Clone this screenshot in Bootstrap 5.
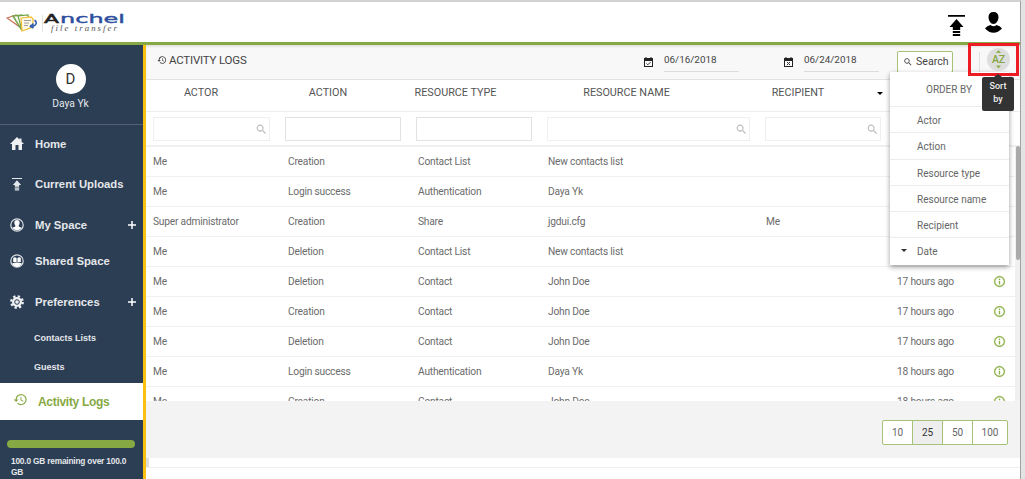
<!DOCTYPE html>
<html lang="en">
<head>
<meta charset="utf-8">
<title>Activity Logs</title>
<link href="https://cdn.jsdelivr.net/npm/bootstrap@5.3.0/dist/css/bootstrap.min.css" rel="stylesheet">
<style>
body{background:#e3e3e3;font-family:Roboto,"Liberation Sans",sans-serif;font-size:10.5px;line-height:14px;color:#666;height:479px;overflow:hidden}
svg{display:block;flex:none}
.app{width:1021px;height:479px;background:#fff;border-top:2px solid #d3d3d3;border-right:1px solid #a2a2a2}
.topbar{height:43px;border-bottom:3px solid #87a944;padding:0 18px 0 6px;color:#000}
.side{width:146px;background:#2c3e54;border-right:3px solid #fdbf12;color:#e4e7ea;font-family:"Liberation Sans",sans-serif;font-weight:700}
.profile{height:80px;border-bottom:1px solid #536071;padding:19px 2px 0 0}
.avatar{width:30px;height:30px;background:#fff;color:#333;font:15px/30px Roboto,sans-serif}
.user{font:10.3px/14px Roboto,sans-serif;margin-top:3px}
.item{padding:0 6px 0 10px;font-size:11.3px}
.item span{margin-left:11px}
.sub{font-size:9px;padding-left:34px;line-height:29px;height:29px}
.active-item{height:37px;background:#fff;color:#87a944;font-size:12px;letter-spacing:-.3px;padding-left:13px}
.active-item span{margin-left:10px}
.quota{height:8px;background:#87a944;border-radius:4px;margin:20px 8px 0 7px}
.quota-text{font-size:8.300px;letter-spacing:-.18px;line-height:11px;margin:8px 8px 0 11px}
.main{width:874px}
.tools{height:35px;background:#f8f8f8;border-bottom:1px solid #e2e2e2;box-shadow:inset 0 2px 2px #e4e4e4;color:#444}
.title{font-size:11.5px;letter-spacing:-.2px;width:498px;padding:0 0 4px 11px;gap:2px}
.date{width:75px;height:20px;border-bottom:1px solid #dcdcdc;font-size:9.900px;line-height:15px}
.search{width:56px;height:22px;border:1px solid #a5c275;border-radius:2px;background:#fff;font-size:10.6px;padding:0 5px;gap:3px;color:#444}
.logrow{display:grid;grid-template-columns:132px 131px 131px 218px 131px 102px 1fr}
.heads{height:32px;border-bottom:1px solid #eee;font-size:10.8px;align-items:center;color:#555;padding-bottom:6px;text-align:center}
.filters{height:35px;border-bottom:2px solid #f0f0f0;padding-top:5px}
.filter{height:24px;margin:0 8px 0 7px;border:1px solid #e2e2e2;padding-right:1px}
.filter.lite{border-color:#efefef}
.rows{height:254px;overflow:hidden;border-right:5px solid #f0f0f0}
.rows .logrow{height:30px;border-bottom:1px solid #f0f0f0;align-items:center;color:#6b6b6b;font-size:10.2px;letter-spacing:-.2px}
.rows .logrow>*{padding-left:8px}
.rows .logrow>:first-child{padding-left:7px}.rows .logrow>:nth-child(2){padding-left:10px}.rows .logrow>:nth-child(3){padding-left:9px}
.pager{height:57px;background:#f3f3f3;padding:19px 12px 0 0}
.pages{height:25px;border:1px solid #a5c275;border-radius:2px;background:#fff;line-height:23px;font-size:10px}
.pages span{width:30px;text-align:center}.pages span:first-child{width:29px}.pages span+span{border-left:1px solid #a5c275}.pages span:last-child{width:35px}
.order{left:890px;top:70px;width:119px;height:193px;background:#fff;box-shadow:0 2px 5px #0006;z-index:3;font-size:10px}
.order div{height:26.3px;line-height:27px;border-top:1px solid #ececec;padding-left:27px}
.order .order-head{height:34px;line-height:36px;border:0;padding-left:36px}
.callout{left:968px;top:41px;width:51px;height:33px;border:3px solid #ed1c24;z-index:5}
.sorter{left:987px;top:46px;width:23px;height:23px;background:#dedede;z-index:4}
.tip{left:982px;top:75px;width:32px;height:34px;background:#333;color:#eee;border-radius:2px;font:500 9px/13px Roboto,sans-serif;z-index:6;padding-top:3px}
.tip:before{content:"";position:absolute;left:12px;top:-3px;border:4px solid transparent;border-top:0;border-bottom:3px solid #333}
.thumb{left:1016px;top:144px;width:4px;height:114px;background:#aaa;border-radius:2px}
.rule{height:10px;border-bottom:1px solid #eee}
.rule i{display:block;width:3px;height:9px;background:#ddd}
</style>
</head>
<body>
<svg class="d-none">
<symbol id="hist" viewBox="0 0 24 24"><path fill="currentColor" d="M13 3a9 9 0 0 0-9 9H1l4 4 4-4H6a7 7 0 1 1 2 5l-1.500 1.400A9 9 0 1 0 13 3zm-1 5v5l4.300 2.500.7-1.200-3.500-2.100V8z"/></symbol>
<symbol id="mag" viewBox="0 0 24 24"><path fill="currentColor" d="M15.500 14h-.8l-.3-.3A6.500 6.500 0 1 0 13.700 14.400l.3.3v.8l5 5 1.500-1.500zm-6 0a4.500 4.500 0 1 1 0-9 4.500 4.500 0 0 1 0 9z"/></symbol>
<symbol id="up" viewBox="0 0 17 22"><path fill="currentColor" d="M0 0h17v1.700H0zM8.500 4l7 8h-3.300v3H4.800v-3H1.500zM4.800 16h7.400v2H4.800zm0 3h7.400v2H4.800z"/></symbol>
<symbol id="info" viewBox="0 0 24 24"><path fill="#8db04b" stroke="#8db04b" stroke-width=".5" d="M11 7h2v2h-2zm0 4h2v6h-2zm1-9a10 10 0 1 0 0 20 10 10 0 0 0 0-20zm0 18a8 8 0 1 1 0-16 8 8 0 0 1 0 16z"/></symbol>
</svg>
<div class="app position-relative">
<header class="topbar d-flex justify-content-between">
<svg width="124" height="36" viewBox="6 2 124 36">
<path d="M7 18l9-3 4 12z" fill="#fff" stroke="#c8755a" stroke-width="1.300"/>
<path d="M13 16l9-1 3 13-4 1z" fill="#fff" stroke="#75a649" stroke-width="1.500"/>
<path d="M18 16l10-1 1 11-7 4z" fill="#fff" stroke="#6da144" stroke-width="1.200"/>
<path d="M21 18l10-1 2 2v8l-11 4z" fill="#fffbe8" stroke="#f3bd2d" stroke-width="1.200"/>
<path d="M24 20.500h7M24 23h5M24 25.500h4" stroke="#888" stroke-width=".8"/>
<path d="M34.500 20c3 2 2 5-1 6l-3.500-.5m3.500-2-3 3 3 1.500" fill="none" stroke="#315fb0" stroke-width="1.600"/>
<path d="M42.500 15v17" stroke="#e5e5e5"/>
<g font-family="DejaVu Sans,sans-serif" font-size="12.800"><text x="44" y="22.700" textLength="15" lengthAdjust="spacingAndGlyphs" fill="#222" stroke="#222" stroke-width=".5">A</text><text x="60" y="22.700" textLength="65" lengthAdjust="spacingAndGlyphs" fill="#2d4f9e" stroke="#2d4f9e" stroke-width=".4">nchel</text></g>
<text x="51" y="30.500" textLength="66" font-family="Liberation Serif,serif" font-style="italic" font-size="8.800" fill="#555">file transfer</text>
</svg>
<div class="d-flex" style="gap:20px"><svg style="margin-top:13px" width="17" height="22"><use href="#up"/></svg>
<svg style="margin-top:10px" width="17" height="21" viewBox="0 0 17 21"><path d="M8.500 0c3.400 0 5 2 5 5 0 3.500-2.200 7-5 7s-5-3.500-5-7c0-3 1.600-5 5-5zM5.500 13q3 2.500 6 0 3.500.7 5.500 3.500Q13 20.700 8.500 20.700T0 16.500q2-2.800 5.500-3.500z"/></svg></div>
</header>
<div class="d-flex">
<aside class="side" style="height:434px">
<div class="profile d-flex flex-column align-items-center"><div class="avatar rounded-circle text-center">D</div><div class="user">Daya Yk</div></div>
<div class="item d-flex align-items-center" style="height:37px"><svg width="14" height="13" viewBox="0 0 14 13"><path fill="#eef0f2" d="M7 0l2.500 2.500V1.500h2v3L14 7h-2v6H8.500V8h-3v5H2V7H0z"/></svg><span>Home</span></div>
<div class="item d-flex align-items-center" style="height:44px"><svg width="14" height="13"><use href="#up"/></svg><span>Current Uploads</span></div>
<div class="item d-flex align-items-center" style="height:37px"><svg width="14" height="14" viewBox="0 0 14 14"><circle cx="7" cy="7" r="6.200" fill="none" stroke="#dde1e5" stroke-width="1.200"/><path fill="#fff" d="M7 2c2 0 2.800 1.200 2.600 3C9.500 6.500 9 7.300 8.400 8c0 1 2.600.8 3.300 2Q7 14.500 2.300 10c.7-1.200 3.300-1 3.300-2-.6-.7-1.100-1.500-1.200-3C4.200 3.200 5 2 7 2z"/></svg><span>My Space</span><svg class="ms-auto" width="10" height="10" viewBox="0 0 10 10"><path d="M5 1v8M1 5h8" stroke="#fff" stroke-width="1.500"/></svg></div>
<div class="item d-flex align-items-center" style="height:36px"><svg width="14" height="14" viewBox="0 0 14 14"><circle cx="7" cy="7" r="6.200" fill="none" stroke="#dde1e5" stroke-width="1.200"/><path fill="#fff" d="M3.200 4q1.700-1.500 3.400 0v4H3.200zm4.200 0q1.700-1.500 3.400 0v4H7.400zM2 9.500q5-2 10 0-2 3.500-5 3.500T2 9.500z"/></svg><span>Shared Space</span></div>
<div class="item d-flex align-items-center" style="height:45px"><svg width="14" height="14" viewBox="0 0 14 14"><circle cx="7" cy="7" r="5.700" fill="none" stroke="#eef0f2" stroke-width="2.400" stroke-dasharray="2.240"/><circle cx="7" cy="7" r="5" fill="#eef0f2"/><circle cx="7" cy="7" r="2.300" fill="none" stroke="#2c3e54"/></svg><span>Preferences</span><svg class="ms-auto" width="10" height="10" viewBox="0 0 10 10"><path d="M5 1v8M1 5h8" stroke="#fff" stroke-width="1.500"/></svg></div>
<div class="sub">Contacts Lists</div><div class="sub">Guests</div>
<div class="active-item d-flex align-items-center" style="margin-top:1px"><svg width="15" height="15" style="margin-top:-4px"><use href="#hist"/></svg><span>Activity Logs</span></div>
<div class="quota"></div><div class="quota-text">100.0 GB remaining over 100.0 GB</div>
</aside>
<main class="main">
<div class="tools d-flex align-items-center"><div class="title d-flex align-items-center"><svg width="10" height="10"><use href="#hist"/></svg>ACTIVITY LOGS</div>
<svg width="9" height="10" viewBox="0 0 9 10"><path fill="#222" d="M0 1h1.500V0h1v1h4V0h1v1H9v9H0zm1 3v5h7V4z"/><path d="M2.500 6.500l1.300 1.300 2.700-2.700" fill="none" stroke="#333"/></svg>
<div class="date" style="margin-left:11px">06/16/2018</div>
<svg style="margin-left:45px" width="9" height="10" viewBox="0 0 9 10"><path fill="#222" d="M0 1h1.500V0h1v1h4V0h1v1H9v9H0zm1 3v5h7V4z"/><path d="M3 5l3 3m0-3L3 8" stroke="#333"/></svg>
<div class="date" style="margin-left:11px">06/24/2018</div>
<div class="search d-flex align-items-center" style="margin-left:18px"><svg width="10" height="10"><use href="#mag"/></svg>Search</div>
<div class="border-start" style="height:20px;margin-left:26px"></div></div>
<div class="logrow heads"><div style="padding-right:22px">ACTOR</div><div style="padding-right:31px">ACTION</div><div style="padding-right:38px">RESOURCE TYPE</div><div style="padding-right:45px">RESOURCE NAME</div><div class="position-relative" style="padding-right:51px">RECIPIENT<svg class="position-absolute" style="right:6px;top:6px" width="6" height="3" viewBox="0 0 6 3"><path d="M0 0h6L3 3z"/></svg></div></div>
<div class="logrow filters" id="filters"></div>
<div class="rows" id="rows"></div>
<div class="pager d-flex justify-content-end"><div class="pages d-flex"><span>10</span><span style="background:#eee;color:#333">25</span><span>50</span><span>100</span></div></div>
<div class="rule"><i></i></div>
</main>
</div>
<div class="thumb position-absolute"></div>
<div class="order position-absolute"><div class="order-head">ORDER BY</div><div>Actor</div><div>Action</div><div>Resource type</div><div>Resource name</div><div>Recipient</div><div class="position-relative">Date<svg class="position-absolute" style="left:11px;top:11px" width="6" height="3" viewBox="0 0 6 3"><path fill="#333" d="M0 0h6L3 3z"/></svg></div></div>
<div class="sorter position-absolute rounded-circle"><svg width="23" height="23" viewBox="0 0 23 23"><path fill="#8db04b" d="M9 5h5l-2.500-3zM9 17.500h5l-2.500 3z"/><text x="5" y="15" font-size="10.500" font-weight="500" textLength="13" fill="#83a63e">AZ</text></svg></div>
<div class="callout position-absolute"></div>
<div class="tip position-absolute text-center">Sort<br>by</div>
</div>
<script>
document.getElementById('filters').innerHTML=[1,0,0,1,1].map(m=>`<div class="filter d-flex align-items-center justify-content-end ${m?'lite':''}">${m?'<svg width="13" height="13" color="#bbb"><use href="#mag"/></svg>':''}</div>`).join('');
document.getElementById('rows').innerHTML=[
['Me','Creation','Contact List','New contacts list','',''],
['Me','Login success','Authentication','Daya Yk','',''],
['Super administrator','Creation','Share','jgdui.cfg','Me',''],
['Me','Deletion','Contact List','New contacts list','',''],
['Me','Deletion','Contact','John Doe','','17 hours ago'],
['Me','Creation','Contact','John Doe','','17 hours ago'],
['Me','Deletion','Contact','John Doe','','17 hours ago'],
['Me','Login success','Authentication','Daya Yk','','18 hours ago'],
['Me','Creation','Contact','John Doe','','18 hours ago']
].map(r=>'<div class="logrow">'+r.map(t=>`<div>${t}</div>`).join('')+(r[5]?'<div style="padding-left:2px"><svg width="13" height="13"><use href="#info"/></svg></div>':'')+'</div>').join('');
</script>
<script src="https://cdn.jsdelivr.net/npm/bootstrap@5.3.0/dist/js/bootstrap.bundle.min.js"></script>
</body>
</html>
